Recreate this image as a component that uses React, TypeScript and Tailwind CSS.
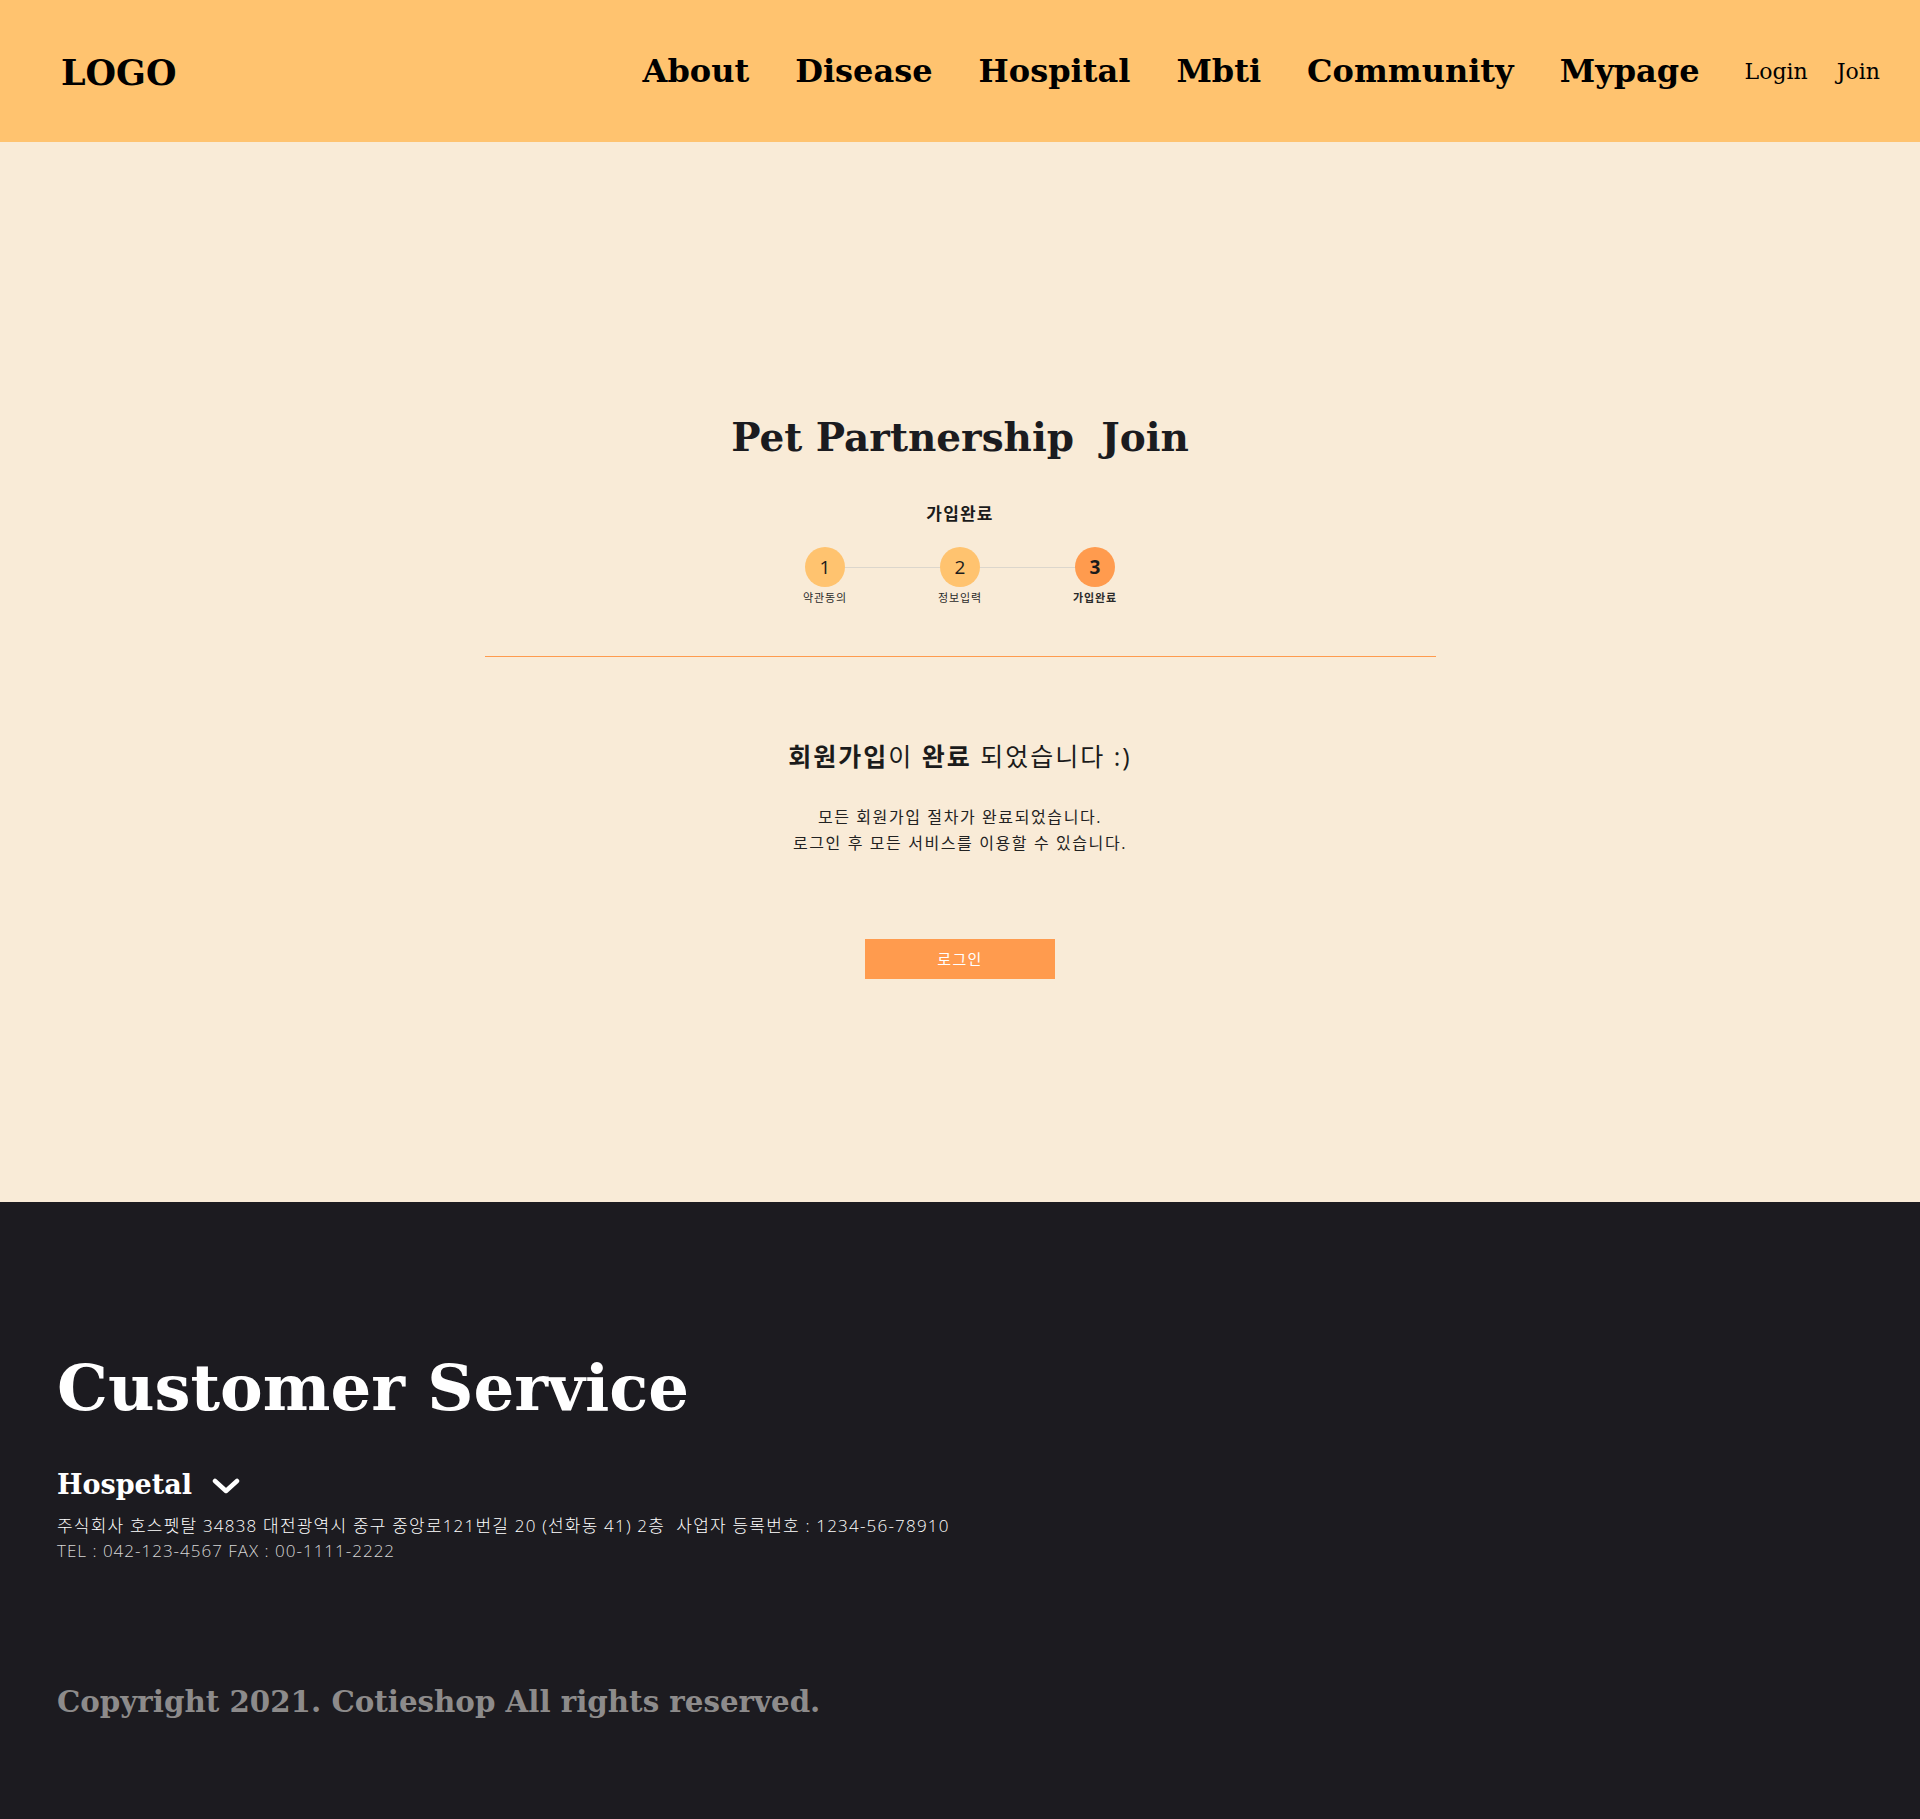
const navItems = ['About', 'Disease', 'Hospital', 'Mbti', 'Community', 'Mypage'];

const steps = [
  { num: '1', label: '약관동의', active: false },
  { num: '2', label: '정보입력', active: false },
  { num: '3', label: '가입완료', active: true },
];

const serif = "font-['DejaVu_Serif',serif]";
const sans = "font-['Open_Sans','Noto_Sans_CJK_KR',sans-serif]";

function Header() {
  return (
    <header className="h-[142px] bg-[#ffc36f] flex items-center justify-between pl-[61px] pr-[40px]">
      <div className={`${serif} text-[35px] font-bold text-black pt-[4px]`}>LOGO</div>
      <nav className="flex items-center">
        <ul className="flex items-center gap-[46px]">
          {navItems.map((item) => (
            <li key={item} className={`${serif} text-[32px] font-bold text-black`}>
              {item}
            </li>
          ))}
        </ul>
        <div className="flex items-center gap-[29px] ml-[45px]">
          <span className={`${serif} text-[22px] text-black`}>Login</span>
          <span className={`${serif} text-[22px] text-black`}>Join</span>
        </div>
      </nav>
    </header>
  );
}

function Stepper() {
  return (
    <div className="flex justify-center">
      {steps.map((step, i) => (
        <div key={step.num} className="relative flex flex-col items-center w-[135px]">
          {i < steps.length - 1 && (
            <div className="absolute top-[20px] left-[67px] w-[135px] h-px bg-[#dcd6cc]" />
          )}
          <div
            className={`relative z-10 w-[40px] h-[40px] rounded-full flex items-center justify-center text-[19px] text-[#1b1b1b] ${sans} ${
              step.active ? 'bg-[#ff9b4e] font-bold' : 'bg-[#ffc36f]'
            }`}
          >
            {step.num}
          </div>
          <span
            className={`mt-[3px] text-[11px] leading-[16px] tracking-[0.9px] text-[#2a2a2a] ${sans} ${
              step.active ? 'font-bold' : ''
            }`}
          >
            {step.label}
          </span>
        </div>
      ))}
    </div>
  );
}

function Main() {
  return (
    <main className="bg-[#f9ebd7] pt-[269px] pb-[223px] flex flex-col items-center">
      <h1 className={`${serif} text-[39px] leading-[53px] font-bold text-[#1b1b1f] whitespace-pre`}>
        Pet Partnership  Join
      </h1>
      <p className={`${sans} mt-[38px] text-[17px] leading-[24px] tracking-[1.2px] font-bold text-[#1b1b1b]`}>
        가입완료
      </p>
      <div className="mt-[21px]">
        <Stepper />
      </div>
      <div className="mt-[50px] w-[951px] h-px bg-[#ff9b4e]" />
      <h2 className={`${sans} mt-[83px] text-[25px] leading-[32px] tracking-[2px] text-[#1b1b1b]`}>
        <b>회원가입</b>이 <b>완료</b> 되었습니다 :)
      </h2>
      <p className={`${sans} mt-[32px] text-[16px] leading-[26px] tracking-[1.6px] text-[#222] text-center`}>
        모든 회원가입 절차가 완료되었습니다.
        <br />
        로그인 후 모든 서비스를 이용할 수 있습니다.
      </p>
      <button
        className={`${sans} mt-[83px] w-[190px] h-[40px] bg-[#ff9b4e] text-white text-[15px] tracking-[1.4px]`}
      >
        로그인
      </button>
    </main>
  );
}

function Footer() {
  return (
    <footer className="bg-[#1c1b20] pt-[146px] pb-[97px] px-[57px]">
      <h2 className={`${serif} text-[64px] leading-[80px] font-bold text-white`}>Customer Service</h2>
      <div className="mt-[39px] flex items-center gap-[20px]">
        <span className={`${serif} text-[27px] leading-[36px] font-bold text-white`}>Hospetal</span>
        <svg width="28" height="16" viewBox="0 0 28 16" fill="none" className="mt-[2px]">
          <polyline
            points="3,3 14,13 25,3"
            stroke="white"
            strokeWidth="4.5"
            strokeLinecap="round"
            strokeLinejoin="round"
          />
        </svg>
      </div>
      <p className={`${sans} mt-[10px] text-[17px] leading-[26px] font-light text-white tracking-[1.2px]`}>
        주식회사 호스펫탈 34838 대전광역시 중구 중앙로121번길 20 (선화동 41) 2층&nbsp; 사업자 등록번호 : 1234-56-78910
      </p>
      <p className={`${sans} text-[17px] leading-[24px] font-light text-[#d6d6d6] tracking-[1px]`}>
        TEL : 042-123-4567 FAX : 00-1111-2222
      </p>
      <p className={`${serif} mt-[119px] text-[29.3px] leading-[40px] font-bold text-[#8d8b8b]`}>
        Copyright 2021. Cotieshop All rights reserved.
      </p>
    </footer>
  );
}

export default function App() {
  return (
    <div className="min-h-screen">
      <Header />
      <Main />
      <Footer />
    </div>
  );
}
